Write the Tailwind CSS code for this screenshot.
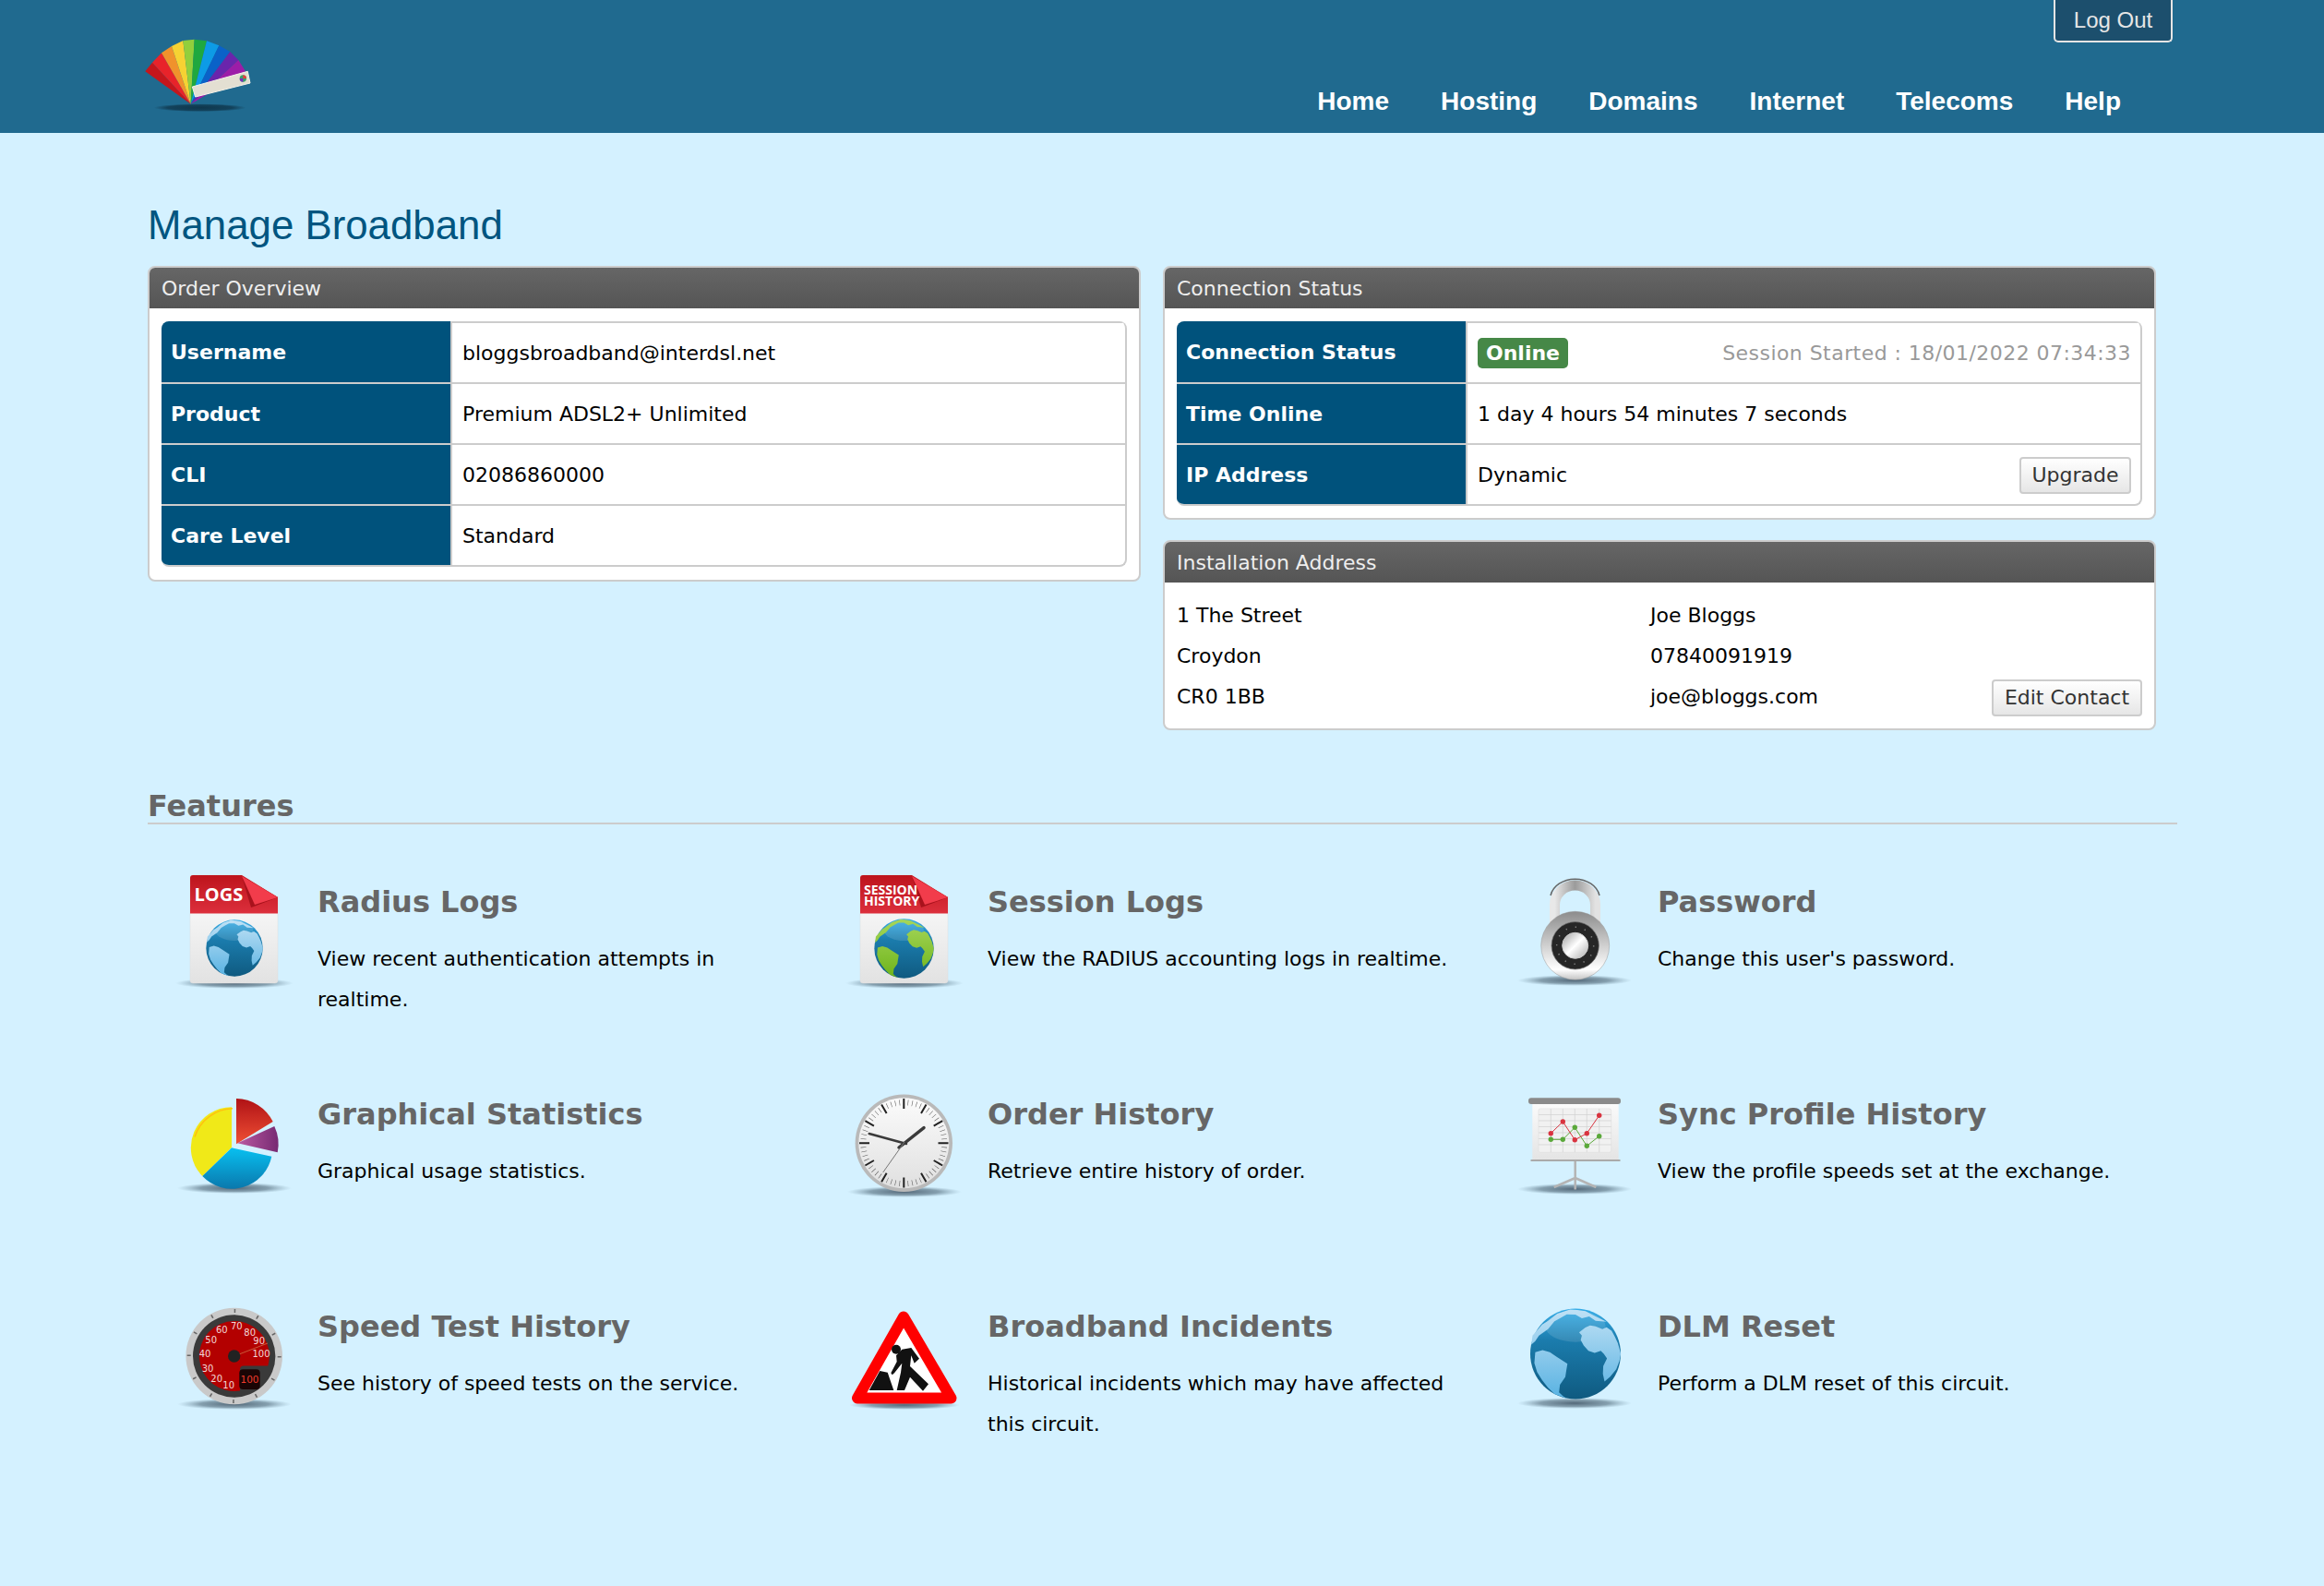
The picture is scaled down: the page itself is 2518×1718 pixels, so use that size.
<!DOCTYPE html>
<html lang="en">
<head>
    <meta charset="UTF-8">
    <meta name="viewport" content="width=device-width, initial-scale=1">
    <title>Manage Broadband</title>
    <script src="https://cdn.jsdelivr.net/npm/@tailwindcss/browser@4"></script>
</head>
<body class="bg-[#d4f1ff] font-['DejaVu_Sans',sans-serif] text-[22px] text-black min-h-[1718px]">

    <!-- shared gradients and the globe -->
    <svg class="absolute w-0 h-0" aria-hidden="true">
        <defs>
            <radialGradient id="shadow"><stop offset="0" stop-color="#45596a" stop-opacity=".9"/><stop offset=".6" stop-color="#5b7484" stop-opacity=".65"/><stop offset="1" stop-color="#7a99ab" stop-opacity="0"/></radialGradient>
            <radialGradient id="logoShadow"><stop offset="0" stop-color="#0d3145" stop-opacity=".9"/><stop offset=".7" stop-color="#0d3145" stop-opacity=".7"/><stop offset="1" stop-color="#0d3145" stop-opacity="0"/></radialGradient>
            <linearGradient id="docRed" x1="0" y1="0" x2="0" y2="1"><stop offset="0" stop-color="#bd141c"/><stop offset="1" stop-color="#dc2f3c"/></linearGradient>
            <linearGradient id="docWhite" x1="0" y1="0" x2="0" y2="1"><stop offset="0" stop-color="#ffffff"/><stop offset="1" stop-color="#e2e2e2"/></linearGradient>
            <linearGradient id="sea" x1="0" y1="0" x2="0" y2="1"><stop offset="0" stop-color="#35ade8"/><stop offset=".35" stop-color="#1b7cad"/><stop offset="1" stop-color="#0f5a80"/></linearGradient>
            <linearGradient id="landBlue" x1="0" y1="0" x2="0" y2="1"><stop offset="0" stop-color="#c0e1f5"/><stop offset="1" stop-color="#58b2e2"/></linearGradient>
            <linearGradient id="landGreen" x1="0" y1="0" x2="0" y2="1"><stop offset="0" stop-color="#a6d65a"/><stop offset="1" stop-color="#6eb41a"/></linearGradient>
            <linearGradient id="metal" x1="0" y1="0" x2="0" y2="1"><stop offset="0" stop-color="#8c8c8c"/><stop offset=".45" stop-color="#c9c9c9"/><stop offset=".85" stop-color="#fff"/><stop offset="1" stop-color="#c4c4c4"/></linearGradient>
            <linearGradient id="metalSide" x1="0" y1="0" x2="1" y2="0"><stop offset="0" stop-color="#e8e8e8"/><stop offset=".5" stop-color="#9b9b9b"/><stop offset="1" stop-color="#e2e2e2"/></linearGradient>
            <linearGradient id="knob" x1="0" y1="0" x2="1" y2="1"><stop offset="0" stop-color="#9d9d9d"/><stop offset=".5" stop-color="#fff"/><stop offset="1" stop-color="#aaa"/></linearGradient>
            <linearGradient id="pieRed" x1="0" y1="0" x2="0" y2="1"><stop offset="0" stop-color="#b01216"/><stop offset="1" stop-color="#ef4f34"/></linearGradient>
            <linearGradient id="piePurple" x1="0" y1="0" x2="1" y2="0"><stop offset="0" stop-color="#bb5aa2"/><stop offset="1" stop-color="#772a72"/></linearGradient>
            <linearGradient id="pieBlue" x1="0" y1="0" x2="0" y2="1"><stop offset="0" stop-color="#08c0f0"/><stop offset="1" stop-color="#0a78ad"/></linearGradient>
            <linearGradient id="clockFace" x1="0" y1="0" x2="0" y2="1"><stop offset="0" stop-color="#fbfbfb"/><stop offset="1" stop-color="#e0e0e0"/></linearGradient>
            <linearGradient id="board" x1="0" y1="0" x2="0" y2="1"><stop offset="0" stop-color="#fafafa"/><stop offset="1" stop-color="#e4e4e4"/></linearGradient>
            <symbol id="globe" viewBox="0 0 100 100">
                <circle cx="50" cy="50" r="49.5" fill="url(#sea)"/>
                <ellipse cx="50" cy="20" rx="33" ry="17" fill="#fff" opacity=".12"/>
            </symbol>
            <path id="land" d="M60.800 21.300 66 19 72 20 79.400 23 84 21 89.500 24.700 93 31 96.300 38.200 99.700 50 98 58 94.600 66.900 88 75 81.800 80.400 80 72 80.400 63.500 84.500 55 81 50 77.700 46.600 71 49 64.200 46.600 59 41 55.700 34.800 57 30 54 26.400ZM6 48.300 14 46 22 48.300 29 53 41.200 60.800 40 68 38.900 75.300 33 83.800 32 92.200 36 96 40.500 99 27 94 20 87 13.500 78.700 8 70 5 60ZM13.500 18 20 14 30 6 44 1.400 52 2 61 3.400 70 8 84 15 72 14 65 9 57 11 50 7 40.500 6.800 33 11 27 14.500 20 23 10 30 6 36 1.700 40 3 30Z"/>
        </defs>
    </svg>

    <!-- Header -->
    <header class="h-[144px] bg-[#206a8f] flex justify-between">
        <svg class="ml-[140px] mt-[20px] w-[160px] h-[120px]" viewBox="0 0 480 360">
            <ellipse cx="230" cy="290" rx="150" ry="13" fill="url(#logoShadow)"/>
            <polygon points="200,278 52,172 75,143" fill="#c4161c"/>
            <polygon points="200,278 75,143 105,112" fill="#e8232a"/>
            <polygon points="200,278 105,112 138,90" fill="#f0922c"/>
            <polygon points="200,278 138,90 175,72" fill="#f6d233"/>
            <polygon points="200,278 175,72 212,68" fill="#92cf3c"/>
            <polygon points="200,278 212,68 252,73" fill="#1fa83f"/>
            <polygon points="200,278 252,73 292,88" fill="#0d9be6"/>
            <polygon points="200,278 292,88 328,108" fill="#0a62c8"/>
            <polygon points="200,278 328,108 355,135" fill="#6a25ac"/>
            <polygon points="200,278 355,135 378,172" fill="#9c1da8"/>
            <polygon points="205,222 385,172 393,210 215,255" fill="#e3dfd2" stroke="#f5f2e8" stroke-width="3" stroke-linejoin="round"/>
            <circle cx="370" cy="195" r="11" fill="#38a169"/>
            <path d="M370 184a11 11 0 0 1 11 11h-11z" fill="#e53e3e"/>
            <path d="M370 206a11 11 0 0 1-11-11h11z" fill="#7b2cbf"/>
        </svg>
        <div class="flex flex-col items-end mr-[164px]">
            <a class="w-[129px] h-[46px] flex items-center justify-center bg-[#1c4f6d] border-2 border-t-0 border-[#e5e5e5] rounded-b-[5px] font-['Liberation_Sans',sans-serif] text-[24px] text-[#e6e6e6]">Log Out</a>
            <nav class="mt-[44px] mr-[56px] flex gap-[56px] font-['Liberation_Sans',sans-serif] font-bold text-[28px] text-white leading-[40px]">
                <a>Home</a>
                <a>Hosting</a>
                <a>Domains</a>
                <a>Internet</a>
                <a>Telecoms</a>
                <a>Help</a>
            </nav>
        </div>
    </header>

    <main class="pl-[160px] pt-[78px]">
        <h1 class="font-['Liberation_Sans',sans-serif] text-[43.8px] leading-[44px] text-[#005580] mb-[22px]">Manage Broadband</h1>

        <div class="flex items-start gap-[24px]">
            <!-- Order Overview -->
            <section class="w-[1076px] bg-white border-2 border-[#ccc] rounded-lg overflow-hidden">
                <h2 class="h-[44px] px-[13px] pt-[1px] flex items-center bg-linear-to-b from-[#666] to-[#555] text-[#eee]">Order Overview</h2>
                <div class="py-[14px] px-[13px]">
                    <div class="rounded-lg border-r-2 border-b-2 border-[#ccc] overflow-hidden">
                        <div class="flex h-[66px]">
                            <div class="w-[315px] pl-[10px] pt-[1px] flex items-center bg-[#00527c] text-white font-bold border-r-2 border-[#ccc]">Username</div>
                            <div class="flex-1 pl-[11px] pt-[1px] flex items-center border-t-2 border-[#ccc]">bloggsbroadband@interdsl.net</div>
                        </div>
                        <div class="flex h-[66px] border-t-2 border-[#ccc]">
                            <div class="w-[315px] pl-[10px] pt-[1px] flex items-center bg-[#00527c] text-white font-bold border-r-2 border-[#ccc]">Product</div>
                            <div class="flex-1 pl-[11px] pt-[1px] flex items-center">Premium ADSL2+ Unlimited</div>
                        </div>
                        <div class="flex h-[66px] border-t-2 border-[#ccc]">
                            <div class="w-[315px] pl-[10px] pt-[1px] flex items-center bg-[#00527c] text-white font-bold border-r-2 border-[#ccc]">CLI</div>
                            <div class="flex-1 pl-[11px] pt-[1px] flex items-center">02086860000</div>
                        </div>
                        <div class="flex h-[66px] border-t-2 border-[#ccc]">
                            <div class="w-[315px] pl-[10px] pt-[1px] flex items-center bg-[#00527c] text-white font-bold border-r-2 border-[#ccc]">Care Level</div>
                            <div class="flex-1 pl-[11px] pt-[1px] flex items-center">Standard</div>
                        </div>
                    </div>
                </div>
            </section>

            <div class="w-[1076px] flex flex-col gap-[22px]">
                <!-- Connection Status -->
                <section class="bg-white border-2 border-[#ccc] rounded-lg overflow-hidden">
                    <h2 class="h-[44px] px-[13px] pt-[1px] flex items-center bg-linear-to-b from-[#666] to-[#555] text-[#eee]">Connection Status</h2>
                    <div class="pt-[14px] pb-[13px] px-[13px]">
                        <div class="rounded-lg border-r-2 border-b-2 border-[#ccc] overflow-hidden">
                            <div class="flex h-[66px]">
                                <div class="w-[315px] pl-[10px] pt-[1px] flex items-center bg-[#00527c] text-white font-bold border-r-2 border-[#ccc]">Connection Status</div>
                                <div class="flex-1 pl-[11px] pr-[10px] pt-[1px] flex items-center justify-between border-t-2 border-[#ccc]">
                                    <span class="h-[33px] px-[9px] flex items-center rounded-[5px] bg-[#468847] text-white font-bold">Online</span>
                                    <span class="text-[#999] tracking-[.45px]">Session Started : 18/01/2022 07:34:33</span>
                                </div>
                            </div>
                            <div class="flex h-[66px] border-t-2 border-[#ccc]">
                                <div class="w-[315px] pl-[10px] pt-[1px] flex items-center bg-[#00527c] text-white font-bold border-r-2 border-[#ccc]">Time Online</div>
                                <div class="flex-1 pl-[11px] pt-[1px] flex items-center">1 day 4 hours 54 minutes 7 seconds</div>
                            </div>
                            <div class="flex h-[66px] border-t-2 border-[#ccc]">
                                <div class="w-[315px] pl-[10px] pt-[1px] flex items-center bg-[#00527c] text-white font-bold border-r-2 border-[#ccc]">IP Address</div>
                                <div class="flex-1 pl-[11px] pr-[10px] pt-[1px] flex items-center justify-between">
                                    Dynamic
                                    <button class="w-[121px] h-[40px] bg-linear-to-b from-[#fff] to-[#e6e6e6] border-2 border-[#ccc] rounded-[4px] text-[#333]">Upgrade</button>
                                </div>
                            </div>
                        </div>
                    </div>
                </section>

                <!-- Installation Address -->
                <section class="h-[206px] bg-white border-2 border-[#ccc] rounded-lg overflow-hidden">
                    <h2 class="h-[44px] px-[13px] pt-[1px] flex items-center bg-linear-to-b from-[#666] to-[#555] text-[#eee]">Installation Address</h2>
                    <div class="flex pt-[14px] px-[13px] leading-[44px]">
                        <div class="w-[513px]">
                            <p>1 The Street</p>
                            <p>Croydon</p>
                            <p>CR0 1BB</p>
                        </div>
                        <div class="flex-1">
                            <p>Joe Bloggs</p>
                            <p>07840091919</p>
                            <div class="flex justify-between items-center">
                                <p>joe@bloggs.com</p>
                                <button class="w-[163px] h-[40px] leading-none mt-[2px] bg-linear-to-b from-[#fff] to-[#e6e6e6] border-2 border-[#ccc] rounded-[4px] text-[#333]">Edit Contact</button>
                            </div>
                        </div>
                    </div>
                </section>
            </div>
        </div>

        <!-- Features -->
        <h2 class="mt-[58px] w-[2199px] h-[44px] font-bold text-[32px] leading-[48px] text-[#666] border-b-2 border-[#ccc]">Features</h2>

        <div class="mt-[47px] pl-[30px] grid grid-cols-[726px_726px_726px] auto-rows-[230px]">

            <div class="flex gap-[26px]">
                <svg class="w-[128px] h-[132px] shrink-0" viewBox="0 0 128 132">
                    <ellipse cx="64" cy="125" rx="64" ry="6" fill="url(#shadow)"/>
                    <path d="M19 8h53l39 24v90a3 3 0 0 1-3 3H19a3 3 0 0 1-3-3V11a3 3 0 0 1 3-3Z" fill="url(#docWhite)" stroke="#ddd" stroke-width=".5"/>
                    <path d="M19 8h53l39 24v17.500H16V11a3 3 0 0 1 3-3Z" fill="url(#docRed)"/>
                    <polygon points="72,9 111,32 85,42 82,43" fill="#a8121c"/>
                    <polygon points="72,9 111,32 86,40" fill="#f23c4b"/>
                    <text x="20.500" y="36" font-family="Open Sans" font-weight="700" font-size="20" fill="#fff">LOGS</text>
                    <use href="#globe" x="33" y="56" width="62" height="62"/>
                    <use href="#land" transform="translate(33 56) scale(.62)" fill="url(#landBlue)"/>
                </svg>
                <div>
                    <h3 class="mt-[18px] font-bold text-[32px] leading-[38px] text-[#666]">Radius Logs</h3>
                    <p class="mt-[21px] w-[510px] leading-[44px]">View recent authentication attempts in realtime.</p>
                </div>
            </div>

            <div class="flex gap-[26px]">
                <svg class="w-[128px] h-[132px] shrink-0" viewBox="0 0 128 132">
                    <ellipse cx="64" cy="125" rx="64" ry="6" fill="url(#shadow)"/>
                    <path d="M19 8h53l39 24v90a3 3 0 0 1-3 3H19a3 3 0 0 1-3-3V11a3 3 0 0 1 3-3Z" fill="url(#docWhite)" stroke="#ddd" stroke-width=".5"/>
                    <path d="M19 8h53l39 24v17.500H16V11a3 3 0 0 1 3-3Z" fill="url(#docRed)"/>
                    <polygon points="72,9 111,32 85,42 82,43" fill="#a8121c"/>
                    <polygon points="72,9 111,32 86,40" fill="#f23c4b"/>
                    <text x="20" y="28.500" font-family="Open Sans" font-weight="700" font-size="14" fill="#fff">SESSION</text>
                    <text x="20" y="41" font-family="Open Sans" font-weight="700" font-size="14" fill="#fff">HISTORY</text>
                    <use href="#globe" x="31" y="55" width="65" height="65"/>
                    <use href="#land" transform="translate(31 55) scale(.65)" fill="url(#landGreen)"/>
                </svg>
                <div>
                    <h3 class="mt-[18px] font-bold text-[32px] leading-[38px] text-[#666]">Session Logs</h3>
                    <p class="mt-[21px] w-[510px] leading-[44px]">View the RADIUS accounting logs in realtime.</p>
                </div>
            </div>

            <div class="flex gap-[26px]">
                <svg class="w-[128px] h-[132px] shrink-0" viewBox="0 0 128 132">
                    <ellipse cx="64" cy="122" rx="62" ry="6" fill="url(#shadow)"/>
                    <path d="M42.500 70V40a22 21 0 0 1 44 0V70" fill="none" stroke="url(#metalSide)" stroke-width="11"/>
                    <path d="M38 30a27 22 0 0 1 53 0" fill="none" stroke="#666" stroke-width="1.500"/>
                    <circle cx="64.700" cy="84.300" r="37" fill="url(#metal)" stroke="#999" stroke-width=".5"/>
                    <circle cx="64.700" cy="84.300" r="25.700" fill="#262626" stroke="#777" stroke-width=".7"/>
                    <circle cx="64.700" cy="84.300" r="20" fill="none" stroke="#888" stroke-width="1.500" pathLength="12" stroke-dasharray=".12 .88"/>
                    <circle cx="64.700" cy="84.300" r="14" fill="url(#knob)" stroke="#ccc" stroke-width="1"/>
                </svg>
                <div>
                    <h3 class="mt-[18px] font-bold text-[32px] leading-[38px] text-[#666]">Password</h3>
                    <p class="mt-[21px] w-[510px] leading-[44px]">Change this user's password.</p>
                </div>
            </div>

            <div class="flex gap-[26px]">
                <svg class="w-[128px] h-[132px] shrink-0" viewBox="0 0 128 132">
                    <ellipse cx="64" cy="117" rx="62" ry="6" fill="url(#shadow)"/>
                    <path d="M61 29.300V73L29.300 104A44 44 0 0 1 61 29.300Z" fill="#f0e918"/>
                    <path d="M61 29.300A44 44 0 0 0 20 60" fill="none" stroke="#ffc20e" stroke-width="1.500" transform="translate(1 1.500)"/>
                    <path d="M61 73.300 104.300 82.700A44 44 0 0 1 29.300 104Z" fill="url(#pieBlue)"/>
                    <path d="M66 69.300V20A45 45 0 0 1 105.700 45Z" fill="url(#pieRed)"/>
                    <path d="M67.300 68.300 107.300 50A45 45 0 0 1 110.700 78.300Z" fill="url(#piePurple)"/>
                </svg>
                <div>
                    <h3 class="mt-[18px] font-bold text-[32px] leading-[38px] text-[#666]">Graphical Statistics</h3>
                    <p class="mt-[21px] w-[510px] leading-[44px]">Graphical usage statistics.</p>
                </div>
            </div>

            <div class="flex gap-[26px]">
                <svg class="w-[128px] h-[132px] shrink-0" viewBox="0 0 128 132">
                    <ellipse cx="64" cy="121" rx="62" ry="6" fill="url(#shadow)"/>
                    <circle cx="63.300" cy="68.300" r="52.700" fill="#b9b9b9"/>
                    <circle cx="63.300" cy="68.300" r="49" fill="url(#clockFace)"/>
                    <circle cx="63.300" cy="68.300" r="44" fill="none" stroke="#555" stroke-width="6" pathLength="60" stroke-dasharray=".12 .88" stroke-dashoffset=".06"/>
                    <g stroke="#222" stroke-width="2">
                        <path d="M63.300 20v11M63.300 105.500v11M15 68.300h11M100.500 68.300h11"/>
                        <path d="M87.500 26.400l-5.500 9.500M39.100 110.200l5.500-9.500M105.200 44.100l-9.500 5.500M21.400 92.500l9.500-5.500M105.200 92.500l-9.500-5.500M21.400 44.100l9.500 5.500M87.500 110.200l-5.500-9.500M39.100 26.400l5.500 9.500"/>
                    </g>
                    <path d="M25.700 58 66 69" stroke="#3a3a3a" stroke-width="2.500" stroke-linecap="round"/>
                    <path d="M85 51.700 58 73" stroke="#3a3a3a" stroke-width="3.500" stroke-linecap="round"/>
                    <path d="M40.700 100 64 67" stroke="#777" stroke-width="1"/>
                </svg>
                <div>
                    <h3 class="mt-[18px] font-bold text-[32px] leading-[38px] text-[#666]">Order History</h3>
                    <p class="mt-[21px] w-[510px] leading-[44px]">Retrieve entire history of order.</p>
                </div>
            </div>

            <div class="flex gap-[26px]">
                <svg class="w-[128px] h-[132px] shrink-0" viewBox="0 0 128 132">
                    <ellipse cx="64" cy="118" rx="62" ry="6" fill="url(#shadow)"/>
                    <path d="M64.700 87v31.500M64.700 106 41.700 116M64.700 106 87.300 116" stroke="#b4b4b4" stroke-width="2.500" fill="none"/>
                    <rect x="18.300" y="26" width="93.400" height="61.300" fill="url(#board)"/>
                    <rect x="16.500" y="86" width="97" height="2" fill="#aaa"/>
                    <rect x="14" y="19.300" width="100" height="6.700" rx="3" fill="#8a8a8a"/>
                    <rect x="25" y="31" width="78.700" height="47.300" rx="2" fill="#f1f1f1" stroke="#ddd" stroke-width=".6"/>
                    <path d="M38.300 31v47M51.300 31v47M64.300 31v47M77.300 31v47M90.700 31v47M25 37.500h78.700M25 44h78.700M25 50.500h78.700M25 57h78.700M25 63.500h78.700M25 70h78.700" stroke="#d0d0d0" stroke-width=".7"/>
                    <polyline points="38.300,64.300 51.300,64.300 64.300,51.300 77.300,71.300 90.700,60.700" fill="none" stroke="#5aa83a" stroke-width="1"/>
                    <polyline points="38.300,57.700 51.300,45 64.300,64.700 77.300,57.700 90.700,38.300" fill="none" stroke="#d9333f" stroke-width="1"/>
                    <g fill="#5aa83a"><circle cx="38.300" cy="64.300" r="2.700"/><circle cx="51.300" cy="64.300" r="2.700"/><circle cx="64.300" cy="51.300" r="2.700"/><circle cx="77.300" cy="71.300" r="2.700"/><circle cx="90.700" cy="60.700" r="2.700"/></g>
                    <g fill="#d9333f"><circle cx="38.300" cy="57.700" r="2.700"/><circle cx="51.300" cy="45" r="2.700"/><circle cx="64.300" cy="64.700" r="2.700"/><circle cx="77.300" cy="57.700" r="2.700"/><circle cx="90.700" cy="38.300" r="2.700"/></g>
                </svg>
                <div>
                    <h3 class="mt-[18px] font-bold text-[32px] leading-[38px] text-[#666]">Sync Profile History</h3>
                    <p class="mt-[21px] w-[510px] leading-[44px]">View the profile speeds set at the exchange.</p>
                </div>
            </div>

            <div class="flex gap-[26px]">
                <svg class="w-[128px] h-[132px] shrink-0" viewBox="0 0 128 132">
                    <ellipse cx="64" cy="121" rx="62" ry="6" fill="url(#shadow)"/>
                    <circle cx="63.700" cy="69" r="52.300" fill="#c9c9c9"/>
                    <circle cx="63.700" cy="69" r="49" fill="none" stroke="#666" stroke-width="4" pathLength="24" stroke-dasharray=".12 1.880"/>
                    <circle cx="63.700" cy="69" r="44.700" fill="#3a3a3a"/>
                    <path d="M63.700 31A38 38 0 0 1 100.300 79.500H74a4 4 0 0 0-4 4V106.500A38 38 0 1 1 63.700 31Z" fill="#b30000"/>
                    <rect x="69.300" y="83.300" width="22.400" height="21.700" rx="4" fill="#1a0505"/>
                    <path d="M63.700 69 100 55" stroke="#c85a3a" stroke-width="1"/>
                    <circle cx="63.700" cy="69" r="6.700" fill="#222"/>
                    <g font-family="DejaVu Sans" font-size="10" fill="#f2d8d8" text-anchor="middle">
                        <text x="50.300" y="44">60</text><text x="66.300" y="40">70</text><text x="80.700" y="47">80</text><text x="90.700" y="56">90</text><text x="93" y="70">100</text>
                        <text x="38.700" y="55">50</text><text x="32" y="70">40</text><text x="35" y="86">30</text><text x="44.700" y="97">20</text><text x="57.700" y="104">10</text>
                    </g>
                    <text x="80.500" y="98" font-family="DejaVu Sans" font-size="10.500" fill="#ef3b2c" text-anchor="middle">100</text>
                </svg>
                <div>
                    <h3 class="mt-[18px] font-bold text-[32px] leading-[38px] text-[#666]">Speed Test History</h3>
                    <p class="mt-[21px] w-[510px] leading-[44px]">See history of speed tests on the service.</p>
                </div>
            </div>

            <div class="flex gap-[26px]">
                <svg class="w-[128px] h-[132px] shrink-0" viewBox="0 0 128 132">
                    <ellipse cx="64" cy="122" rx="60" ry="5" fill="url(#shadow)"/>
                    <polygon points="63,26.500 13,114.500 114.500,114.500" fill="#fff" stroke="#f00" stroke-width="12" stroke-linejoin="round"/>
                    <circle cx="55" cy="61.700" r="5" fill="#111"/>
                    <polygon points="25.700,106 37.300,85 45.700,86.700 52.300,106" fill="#111"/>
                    <polygon points="61.300,61.700 71.300,60 80,71.700 74.700,76.700 71.300,68.300 70,80 90,99.300 84,106.700 70,91.700 64,106 55.700,106 60,86.700 61.300,76.700 53,87.300 50.700,89.300 49.300,87.300 55.700,75 55,68.300" fill="#111"/>
                </svg>
                <div>
                    <h3 class="mt-[18px] font-bold text-[32px] leading-[38px] text-[#666]">Broadband Incidents</h3>
                    <p class="mt-[21px] w-[510px] leading-[44px]">Historical incidents which may have affected this circuit.</p>
                </div>
            </div>

            <div class="flex gap-[26px]">
                <svg class="w-[128px] h-[132px] shrink-0" viewBox="0 0 128 132">
                    <ellipse cx="64" cy="120" rx="62" ry="6" fill="url(#shadow)"/>
                    <use href="#globe" x="15.500" y="17" width="99" height="99"/>
                    <use href="#land" transform="translate(15.500 17) scale(.99)" fill="url(#landBlue)"/>
                </svg>
                <div>
                    <h3 class="mt-[18px] font-bold text-[32px] leading-[38px] text-[#666]">DLM Reset</h3>
                    <p class="mt-[21px] w-[510px] leading-[44px]">Perform a DLM reset of this circuit.</p>
                </div>
            </div>

        </div>
    </main>
</body>
</html>
